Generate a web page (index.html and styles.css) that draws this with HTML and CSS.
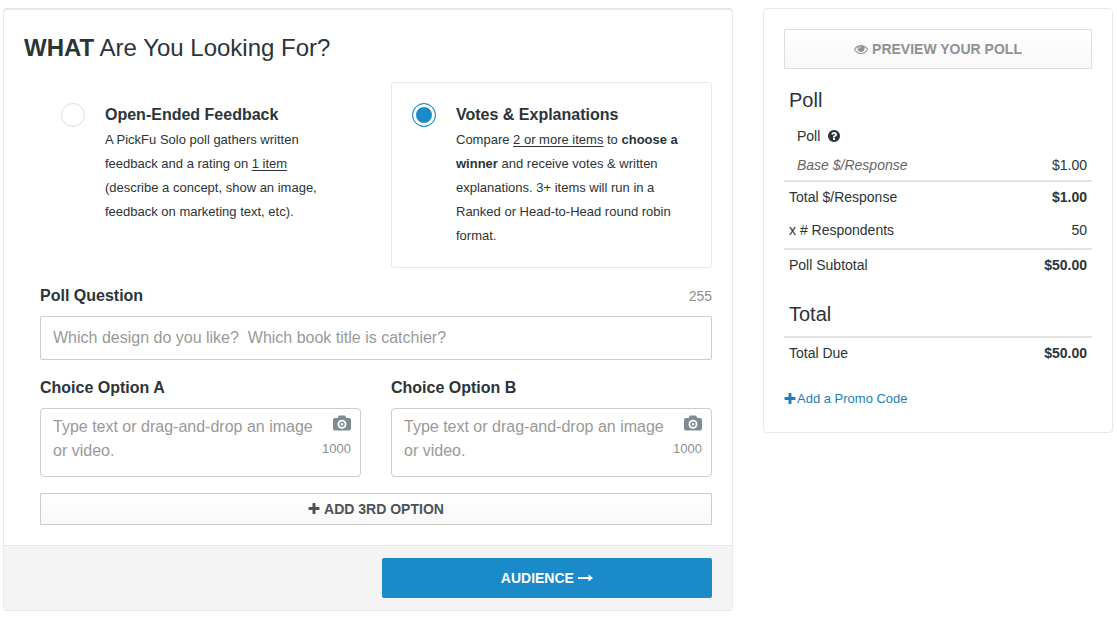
FILE: index.html
```
<!DOCTYPE html>
<html lang="en">
<head>
  <meta charset="UTF-8">
  <meta name="viewport" content="width=device-width, initial-scale=1.0">
  <title>Create a Poll</title>
  <link rel="stylesheet" href="styles.css">
</head>
<body>
  <!-- Shared icons -->
  <svg class="sprite" aria-hidden="true">
    <symbol id="icon-plus" viewBox="128 128 1536 1536">
      <path d="M1600 736v192q0 40-28 68t-68 28h-416v416q0 40-28 68t-68 28h-192q-40 0-68-28t-28-68v-416h-416q-40 0-68-28t-28-68v-192q0-40 28-68t68-28h416v-416q0-40 28-68t68-28h192q40 0 68 28t28 68v416h416q40 0 68 28t28 68z"/>
    </symbol>
    <symbol id="icon-camera" viewBox="0 0 18 16">
      <path fill-rule="evenodd" d="M6 .5h6l1.300 2.500H16a2 2 0 0 1 2 2v8.500a2 2 0 0 1-2 2H2a2 2 0 0 1-2-2V5a2 2 0 0 1 2-2h2.700zM9 4.700a4.500 4.500 0 1 0 0 9 4.500 4.500 0 0 0 0-9zm0 1.800a2.700 2.700 0 1 1 0 5.400 2.700 2.700 0 0 1 0-5.400zm0 1.400a1.300 1.300 0 1 0 0 2.600 1.300 1.300 0 0 0 0-2.600z"/>
    </symbol>
  </svg>

  <div class="page">
    <!-- Poll form -->
    <main class="card builder">
      <form>
        <div class="builder-body">
          <h1><strong>WHAT</strong> Are You Looking For?</h1>

          <div class="fields">
            <div class="columns">
              <label class="poll-type">
                <input type="radio" name="type">
                <span class="poll-type-text">
                  <strong class="title">Open-Ended Feedback</strong>
                  A PickFu Solo poll gathers written feedback and a rating on <u>1 item</u> (describe a concept, show an image, feedback on marketing text, etc).
                </span>
              </label>
              <label class="poll-type selected">
                <input type="radio" name="type" checked>
                <span class="poll-type-text">
                  <strong class="title">Votes &amp; Explanations</strong>
                  Compare <u>2 or more items</u> to <b>choose a winner</b> and receive votes &amp; written explanations. 3+ items will run in a Ranked or Head-to-Head round robin format.
                </span>
              </label>
            </div>

            <div class="field">
              <div class="label-row">
                <label for="question">Poll Question</label>
                <span class="count">255</span>
              </div>
              <input type="text" id="question" class="question" placeholder="Which design do you like?  Which book title is catchier?">
            </div>

            <div class="columns">
              <div class="field">
                <label for="optionA">Choice Option A</label>
                <div class="choice">
                  <textarea id="optionA" rows="2" placeholder="Type text or drag-and-drop an image or video."></textarea>
                  <div class="choice-tools">
                    <button type="button" class="upload" aria-label="Upload media for option A"><svg><use href="#icon-camera"/></svg></button>
                    <span class="count">1000</span>
                  </div>
                </div>
              </div>
              <div class="field">
                <label for="optionB">Choice Option B</label>
                <div class="choice">
                  <textarea id="optionB" rows="2" placeholder="Type text or drag-and-drop an image or video."></textarea>
                  <div class="choice-tools">
                    <button type="button" class="upload" aria-label="Upload media for option B"><svg><use href="#icon-camera"/></svg></button>
                    <span class="count">1000</span>
                  </div>
                </div>
              </div>
            </div>

            <button type="button" class="btn btn-add"><svg class="plus"><use href="#icon-plus"/></svg>ADD 3RD OPTION</button>
          </div>
        </div>

        <div class="builder-footer">
          <button type="submit" class="btn btn-next">AUDIENCE
            <svg class="arrow" viewBox="0 0 15 8"><path d="M0 3h10.500V.500L15 4l-4.500 3.500V5H0z"/></svg>
          </button>
        </div>
      </form>
    </main>

    <!-- Price summary -->
    <aside class="card summary">
      <button type="button" class="btn btn-preview">
        <svg class="eye" viewBox="0 384 1792 1152"><path d="M1664 960q-152-236-381-353 61 104 61 225 0 185-131.5 316.5t-316.5 131.5-316.5-131.5-131.5-316.5q0-121 61-225-229 117-381 353 133 205 333.5 326.5t434.5 121.5 434.5-121.5 333.5-326.5zm-720-384q0-20-14-34t-34-14q-125 0-214.5 89.5t-89.5 214.5q0 20 14 34t34 14 34-14 14-34q0-86 61-147t147-61q20 0 34-14t14-34zm848 384q0 34-20 69-140 230-376.5 368.5t-499.5 138.5-499.5-139-376.5-368q-20-35-20-69t20-69q140-229 376.5-368t499.5-139 499.5 139 376.5 368q20 35 20 69z"/></svg>PREVIEW YOUR POLL
      </button>

      <h2>Poll</h2>
      <table>
        <tr class="item">
          <td colspan="2">Poll
            <svg class="help" viewBox="128 128 1536 1536"><path d="M1024 1376v-192q0-14-9-23t-23-9h-192q-14 0-23 9t-9 23v192q0 14 9 23t23 9h192q14 0 23-9t9-23zm256-672q0-88-55.5-163t-138.5-116-170-41q-243 0-371 213-15 24 8 42l132 100q7 6 19 6 16 0 25-12 53-68 86-92 34-24 86-24 48 0 85.5 26t37.5 59q0 38-20 61t-68 45q-63 28-115.5 86.5t-52.5 125.5v36q0 14 9 23t23 9h192q14 0 23-9t9-23q0-19 21.5-49.5t54.5-49.5q32-18 49-28.5t46-35 44.5-48 28-60.5 12.5-81zm384 192q0 209-103 385.5t-279.5 279.5-385.5 103-385.5-103-279.5-279.5-103-385.5 103-385.5 279.5-279.5 385.5-103 385.5 103 279.5 279.5 103 385.5z"/></svg>
          </td>
        </tr>
        <tr class="item base"><td><em>Base $/Response</em></td><td>$1.00</td></tr>
        <tr class="total"><td>Total $/Response</td><td>$1.00</td></tr>
        <tr class="respondents"><td>x # Respondents</td><td>50</td></tr>
        <tr class="total"><td>Poll Subtotal</td><td>$50.00</td></tr>
      </table>

      <h2 class="grand-total">Total</h2>
      <table>
        <tr class="total"><td>Total Due</td><td>$50.00</td></tr>
      </table>

      <a href="#" class="promo"><svg class="plus"><use href="#icon-plus"/></svg>Add a Promo Code</a>
    </aside>
  </div>
</body>
</html>
```
FILE: styles.css
```
/* General Reset */
* {
  margin: 0;
  padding: 0;
  box-sizing: border-box;
}

body {
  font-family: "Liberation Sans", Arial, sans-serif;
  font-size: 14px;
  line-height: 24px;
  color: #2b3439;
  background: #fff;
}

button,
input,
textarea {
  font-family: inherit;
}

svg {
  fill: currentColor;
}

.sprite {
  display: none;
}

.page {
  display: grid;
  grid-template-columns: minmax(0, 1fr) 350px;
  align-items: start;
  gap: 30px;
  padding: 8px 4px 8px 3px;
}

.card {
  border: 1px solid #e8e8e8;
  border-radius: 4px;
  overflow: hidden;
}

/* Poll form */
.builder {
  border-top-width: 2px;
}

.builder-body {
  padding: 20px;
}

h1 {
  font-size: 24px;
  font-weight: normal;
  line-height: 36px;
  margin-bottom: 16px;
}

.fields {
  display: flex;
  flex-direction: column;
  gap: 16px;
  padding-left: 16px;
}

.columns {
  display: grid;
  grid-template-columns: 1fr 1fr;
  gap: 30px;
}

.poll-type {
  display: flex;
  align-items: flex-start;
  gap: 20px;
  padding: 20px 20px 19px;
  border: 1px solid transparent;
  border-radius: 3px;
  font-size: 13px;
  cursor: pointer;
}

.poll-type.selected {
  border-color: #e8e8e8;
}

.poll-type input {
  appearance: none;
  flex: none;
  width: 24px;
  height: 24px;
  border: 1px solid #ddd;
  border-radius: 50%;
}

.poll-type input:checked {
  border-color: #1a8ac9;
  background: #1a8ac9;
  box-shadow: inset 0 0 0 3px #fff;
}

.poll-type .title {
  display: block;
  margin-bottom: 1px;
  font-size: 16px;
}

.poll-type u {
  text-underline-offset: 2px;
}

.field {
  display: flex;
  flex-direction: column;
  gap: 8px;
}

.field label {
  font-size: 16px;
  font-weight: bold;
}

.label-row {
  display: flex;
  justify-content: space-between;
}

.count {
  color: #8a8f92;
}

.question {
  width: 100%;
  height: 44px;
  padding: 0 12px;
  border: 1px solid #ccc;
  border-radius: 2px;
  font-size: 16px;
}

::placeholder {
  color: #999;
}

.choice {
  display: flex;
  padding: 6px 9px 13px 12px;
  border: 1px solid #ccc;
  border-radius: 4px;
}

.choice textarea {
  flex: 1;
  min-width: 0;
  border: none;
  background: none;
  resize: none;
  font-size: 16px;
  line-height: 24px;
  overflow: hidden;
}

.choice-tools {
  display: flex;
  flex-direction: column;
  align-items: flex-end;
}

.choice-tools .count {
  font-size: 13px;
}

.upload {
  display: flex;
  align-items: flex-start;
  height: 22px;
  border: none;
  background: none;
  color: #7f8b94;
  cursor: pointer;
}

.upload svg {
  width: 18px;
  height: 16px;
}

/* Buttons */
.btn {
  display: flex;
  justify-content: center;
  align-items: center;
  gap: 4px;
  border: 1px solid #ccc;
  border-radius: 1px;
  font-size: 14px;
  font-weight: bold;
  cursor: pointer;
}

.plus {
  width: 12px;
  height: 12px;
}

.btn-add {
  height: 32px;
  background: linear-gradient(#fff, #f8f8f8);
  color: #4d5356;
}

.builder-footer {
  display: flex;
  justify-content: flex-end;
  padding: 12px 20px;
  border-top: 1px solid #e8e8e8;
  background: #f4f4f4;
}

.btn-next {
  width: 48%;
  height: 40px;
  border: none;
  border-radius: 2px;
  background: #1a8ac9;
  color: #fff;
}

.arrow {
  width: 15px;
  height: 8px;
}

/* Price summary */
.summary {
  padding: 20px;
}

.btn-preview {
  width: 100%;
  height: 40px;
  border-color: #ddd;
  background: linear-gradient(#fff, #f8f8f8);
  color: #8d9294;
}

.eye {
  width: 14px;
  height: 9px;
}

h2 {
  padding: 0 5px;
  margin: 18px 0 9px;
  font-size: 20px;
  font-weight: normal;
  line-height: 26px;
}

h2.grand-total {
  margin-top: 22px;
}

table {
  width: 100%;
  border-spacing: 0;
}

td {
  height: 28px;
  padding: 0 5px;
}

td:last-child:not(:first-child) {
  text-align: right;
}

.item td:first-child {
  padding-left: 13px;
}

.base td {
  height: 30px;
}

.base em {
  color: #666;
}

.total td {
  height: 31px;
  border-top: 2px solid #e2e2e2;
}

.total td:last-child {
  font-weight: bold;
}

.respondents td {
  height: 37px;
}

.help {
  width: 12px;
  height: 12px;
  margin-left: 4px;
  vertical-align: -1px;
}

.promo {
  display: flex;
  align-items: center;
  gap: 1px;
  margin: 22px 0 3px;
  font-size: 13px;
  line-height: 20px;
  color: #1c7fb9;
  text-decoration: none;
}
```
